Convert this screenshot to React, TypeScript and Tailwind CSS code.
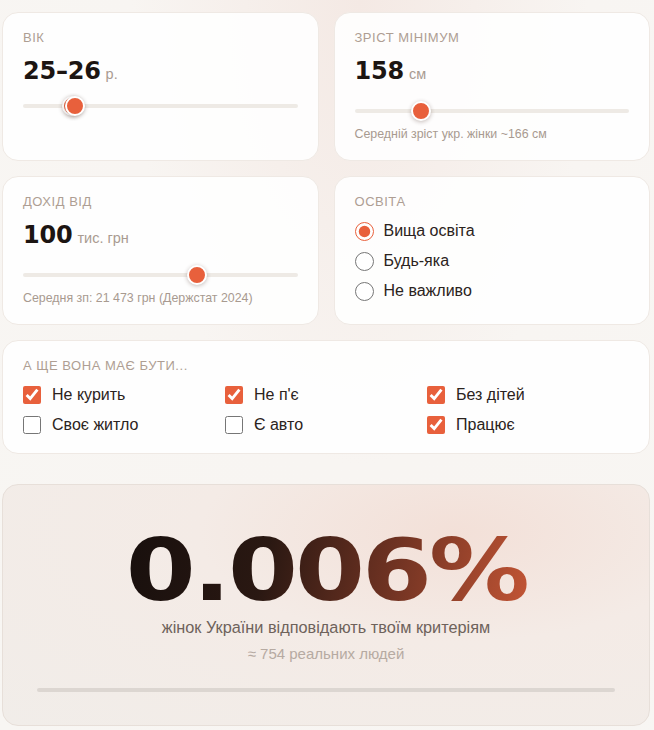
import React from "react";

const sans = "font-['Liberation_Sans',Arial,sans-serif]";
const display = "font-['DejaVu_Sans',Verdana,sans-serif]";

const Label = ({ children }: { children: React.ReactNode }) => (
  <div className={`${sans} text-[13px] leading-4 uppercase tracking-[0.04em] text-[#ae9e93]`}>{children}</div>
);

const Value = ({ value, unit }: { value: string; unit: string }) => (
  <div className="flex items-baseline gap-[5px] mt-[13px] h-[24px]">
    <span className={`${display} font-bold text-[24px] leading-6 tracking-[-0.01em] text-[#1c1512]`}>{value}</span>
    <span className={`${sans} text-[14.5px] text-[#a99b91]`}>{unit}</span>
  </div>
);

const Thumb = ({ left }: { left: number }) => (
  <div
    className="absolute top-1/2 w-[20px] h-[20px] -ml-[10px] -mt-[10px] rounded-full bg-[#e8603c] border-2 border-white shadow-[0_1px_4px_rgba(60,30,20,0.3)]"
    style={{ left: `${left}%` }}
  />
);

const Track = ({ thumbs }: { thumbs: number[] }) => (
  <div className="relative h-[4px] rounded-full bg-[#eeeae5]">
    {thumbs.map((t, i) => (
      <Thumb key={i} left={t} />
    ))}
  </div>
);

const Note = ({ children }: { children: React.ReactNode }) => (
  <div className={`${sans} text-[12.4px] leading-4 text-[#a89a90] mt-[13px]`}>{children}</div>
);

const Card = ({ children, className = "" }: { children: React.ReactNode; className?: string }) => (
  <div className={`bg-white/90 border border-[#efe9e4] rounded-[16px] px-5 pt-[17px] ${className}`}>{children}</div>
);

const Radio = ({ label, checked }: { label: string; checked?: boolean }) => (
  <label className="flex items-center gap-[10px] h-[30px]">
    <input type="radio" name="edu" defaultChecked={checked} className="w-[19px] h-[19px] m-0 accent-[#e8603c]" />
    <span className={`${sans} text-[16px] text-[#2b2320]`}>{label}</span>
  </label>
);

const Check = ({ label, checked }: { label: string; checked?: boolean }) => (
  <label className="flex items-center gap-[11px] h-[30px]">
    <input type="checkbox" defaultChecked={checked} className="w-[18px] h-[18px] m-0 accent-[#e8603c]" />
    <span className={`${sans} text-[16px] text-[#2b2320]`}>{label}</span>
  </label>
);

export default function App() {
  return (
    <div className="min-h-[730px] w-[654px] bg-[radial-gradient(ellipse_at_55%_0%,#f4e9e4_0%,#f8f5f2_45%,#f8f6f3_100%)] pl-[2px] pr-[4px] pt-[12px] pb-[4px]">
      <div className="grid grid-cols-2 gap-[15px]">
        <Card className="h-[149px]">
          <Label>Вік</Label>
          <Value value="25–26" unit="р." />
          <div className="mt-[21px]">
            <Track thumbs={[17.8, 18.8]} />
          </div>
        </Card>
        <Card className="h-[149px]">
          <Label>Зріст мінімум</Label>
          <Value value="158" unit="см" />
          <div className="mt-[26px]">
            <Track thumbs={[24.3]} />
          </div>
          <Note>Середній зріст укр. жінки ~166 см</Note>
        </Card>
        <Card className="h-[149px]">
          <Label>Дохід від</Label>
          <Value value="100" unit="тис. грн" />
          <div className="mt-[26px]">
            <Track thumbs={[63.4]} />
          </div>
          <Note>Середня зп: 21 473 грн (Держстат 2024)</Note>
        </Card>
        <Card className="h-[149px]">
          <Label>Освіта</Label>
          <div className="mt-[6px] flex flex-col">
            <Radio label="Вища освіта" checked />
            <Radio label="Будь-яка" />
            <Radio label="Не важливо" />
          </div>
        </Card>
      </div>

      <Card className="mt-[15px] h-[114px]">
        <Label>А ще вона має бути...</Label>
        <div className="mt-[6px] grid grid-cols-3">
          <Check label="Не курить" checked />
          <Check label="Не п'є" checked />
          <Check label="Без дітей" checked />
          <Check label="Своє житло" />
          <Check label="Є авто" />
          <Check label="Працює" checked />
        </div>
      </Card>

      <div className="mt-[30px] h-[242px] rounded-[16px] border border-[#e7dfd9] bg-[radial-gradient(ellipse_at_70%_20%,#f3e0d8_0%,#f4ebe6_40%,#f1ede9_100%)] flex flex-col items-center pt-[37px]">
        <span
          className={`${display} block font-bold text-[86px] leading-[96px] h-[96px] tracking-[-0.03em] scale-x-[1.17] bg-[linear-gradient(100deg,#170f0d_0%,#2a1812_35%,#6e3222_65%,#c35535_100%)] bg-clip-text text-transparent`}
        >
          0.006%
        </span>
        <div className={`${sans} mt-[1px] text-[16.3px] leading-none text-[#6e625b]`}>жінок України відповідають твоїм критеріям</div>
        <div className={`${sans} mt-[11px] text-[15px] leading-none text-[#b6aaa2]`}>≈ 754 реальних людей</div>
        <div className="mt-[27px] w-[578px] h-[4px] rounded-full bg-[#dcd6d1]" />
      </div>
    </div>
  );
}
